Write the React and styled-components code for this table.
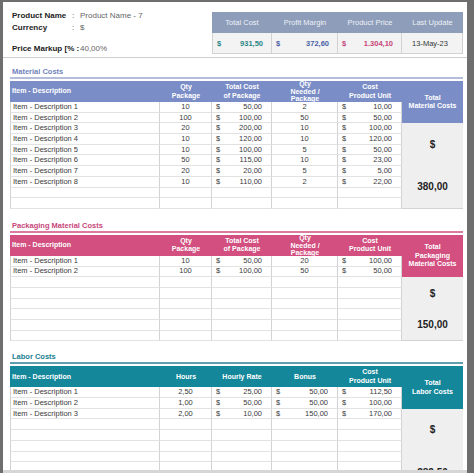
import styled, { createGlobalStyle } from "styled-components";

const GlobalStyle = createGlobalStyle`
  html, body { margin: 0; padding: 0; }
  body {
    background: #6e6e6e;
    font-family: "Liberation Sans", Arial, sans-serif;
    color: #333;
  }
`;

const Sheet = styled.div`
  margin: 2px 0 0 3px;
  width: 464px;
  height: 471px;
  box-sizing: border-box;
  background: #fff;
  overflow: hidden;
  padding: 0 4px 0 7px;
  border-bottom: 3px solid #d6d6d6;
`;

const TopBar = styled.div`
  display: flex;
  justify-content: space-between;
  align-items: flex-start;
  height: 56px;
  box-sizing: border-box;
  margin: 0 -4px 0 -7px;
  padding: 8px 4px 0 9px;
  border-bottom: 1px solid #cfcfcf;
`;

const Info = styled.div`
  display: grid;
  grid-template-columns: 60px 8px auto;
  grid-template-rows: 12px 12px 12px;
  font-size: 8px;
  line-height: 12px;
  white-space: nowrap;
`;

const Label = styled.span`
  font-weight: bold;
  color: #222;
  grid-column: ${(p) => (p.wide ? "1 / span 2" : "auto")};
  margin-top: ${(p) => (p.gap ? "9px" : "0")};
`;

const Colon = styled.span`
  color: #444;
`;

const InfoValue = styled.span`
  color: #666;
  margin-top: ${(p) => (p.gap ? "9px" : "0")};
`;

const Summary = styled.div`
  margin-top: 2px;
  display: grid;
  grid-template-columns: 60px 66px 64px 61px;
  grid-template-rows: 21px 21px;
  font-size: 7.5px;
`;

const SumHead = styled.div`
  background: #8d9dba;
  color: #eef1f7;
  display: flex;
  align-items: center;
  justify-content: center;
`;

const SumValue = styled.div`
  background: #f3f3f3;
  border-right: 1px solid #d2d2d2;
  border-bottom: 1px solid #d2d2d2;
  border-left: ${(p) => (p.first ? "1px solid #d2d2d2" : "none")};
  display: flex;
  align-items: center;
  justify-content: ${(p) => (p.center ? "center" : "space-between")};
  padding: 0 8px 0 4px;
  font-weight: ${(p) => (p.center ? "normal" : "bold")};
  color: ${(p) => p.color};
`;

const SectionTitle = styled.div`
  margin-top: ${(p) => p.top}px;
  padding-left: 2px;
  font-size: 7.5px;
  font-weight: bold;
  line-height: 10px;
  color: ${(p) => p.color};
  border-bottom: 2px solid ${(p) => p.line};
  margin-bottom: 2px;
`;

const Table = styled.div`
  display: grid;
  grid-template-columns: 150px 52px 60px 66px 64px 61px;
  grid-template-rows: 21px repeat(${(p) => p.rows}, 10.7px);
`;

const HeadCell = styled.div`
  background: ${(p) => p.bg};
  color: #fff;
  font-size: 7px;
  font-weight: bold;
  line-height: ${(p) => (p.tight ? "7.5px" : "8.5px")};
  display: flex;
  align-items: center;
  justify-content: ${(p) => (p.left ? "flex-start" : "center")};
  text-align: center;
  padding-left: ${(p) => (p.left ? "2px" : "0")};
  overflow: hidden;
`;

const TotalHead = styled(HeadCell)`
  grid-column: 6;
  grid-row: 1 / span 3;
`;

const Cell = styled.div`
  box-sizing: border-box;
  font-size: 7.5px;
  line-height: 10px;
  color: #3a3a3a;
  border-right: 1px solid #d3d3d3;
  border-bottom: 1px solid #e2e2e2;
  border-left: ${(p) => (p.kind === "text" ? "1px solid #d3d3d3" : "none")};
  display: flex;
  align-items: center;
  justify-content: ${(p) =>
    p.kind === "center" ? "center" : p.kind === "money" ? "space-between" : "flex-start"};
  padding: ${(p) => (p.kind === "money" ? "0 9px 0 4px" : p.kind === "text" ? "0 0 0 2px" : "0")};
  white-space: nowrap;
`;

const TotalBox = styled.div`
  grid-column: 6;
  grid-row: 4 / -1;
  background: #efefef;
  border-bottom: 1px solid #d3d3d3;
  display: grid;
  grid-template-rows: 1fr 1fr;
  place-items: center;
  font-size: 10px;
  font-weight: bold;
  color: #222;
`;

const sections = [
  {
    title: "Material Costs",
    top: 9,
    color: "#7b8dc7",
    titleColor: "#7184bd",
    line: "#b4bedc",
    heads: [["Item - Description"], ["Qty", "Package"], ["Total Cost", "of Package"], ["Qty", "Needed /", "Package"], ["Cost", "Product Unit"]],
    totalHead: ["Total", "Material Costs"],
    kinds: ["text", "center", "money", "center", "money"],
    rows: [
      ["Item - Description 1", "10", "50,00", "2", "10,00"],
      ["Item - Description 2", "100", "100,00", "50", "50,00"],
      ["Item - Description 3", "20", "200,00", "10", "100,00"],
      ["Item - Description 4", "10", "120,00", "10", "120,00"],
      ["Item - Description 5", "10", "100,00", "5", "50,00"],
      ["Item - Description 6", "50", "115,00", "10", "23,00"],
      ["Item - Description 7", "20", "20,00", "5", "5,00"],
      ["Item - Description 8", "10", "110,00", "2", "22,00"],
    ],
    empty: 2,
    total: "380,00",
  },
  {
    title: "Packaging Material Costs",
    top: 12,
    color: "#d24f80",
    titleColor: "#c8477a",
    line: "#dc7a9f",
    heads: [["Item - Description"], ["Qty", "Package"], ["Total Cost", "of Package"], ["Qty", "Needed /", "Package"], ["Cost", "Product Unit"]],
    totalHead: ["Total", "Packaging", "Material Costs"],
    kinds: ["text", "center", "money", "center", "money"],
    rows: [
      ["Item - Description 1", "10", "50,00", "20", "100,00"],
      ["Item - Description 2", "100", "100,00", "50", "50,00"],
    ],
    empty: 6,
    total: "150,00",
  },
  {
    title: "Labor Costs",
    top: 11,
    color: "#14879a",
    titleColor: "#167f90",
    line: "#5e9fab",
    heads: [["Item - Description"], ["Hours"], ["Hourly Rate"], ["Bonus"], ["Cost", "Product Unit"]],
    totalHead: ["Total", "Labor Costs"],
    kinds: ["text", "center", "money", "money", "money"],
    rows: [
      ["Item - Description 1", "2,50", "25,00", "50,00", "112,50"],
      ["Item - Description 2", "1,00", "50,00", "50,00", "100,00"],
      ["Item - Description 3", "2,00", "10,00", "150,00", "170,00"],
    ],
    empty: 7,
    total: "382,50",
  },
];

const Lines = ({ lines }) =>
  lines.map((l, i) => (
    <span key={i}>
      {l}
      {i < lines.length - 1 && <br />}
    </span>
  ));

const CostSection = ({ s }) => {
  const rows = [...s.rows, ...Array(s.empty).fill(["", "", "", "", ""])];
  return (
    <>
      <SectionTitle top={s.top} color={s.titleColor} line={s.line}>
        {s.title}
      </SectionTitle>
      <Table rows={rows.length}>
        {s.heads.map((h, i) => (
          <HeadCell key={i} bg={s.color} left={i === 0} tight={h.length > 2}>
            <div>
              <Lines lines={h} />
            </div>
          </HeadCell>
        ))}
        <TotalHead bg={s.color}>
          <div>
            <Lines lines={s.totalHead} />
          </div>
        </TotalHead>
        {rows.map((r, ri) =>
          r.map((v, ci) => (
            <Cell
              key={`${ri}-${ci}`}
              kind={s.kinds[ci]}
              style={{ gridRow: ri + 2, gridColumn: ci + 1 }}
            >
              {s.kinds[ci] === "money" && v ? (
                <>
                  <span>$</span>
                  <span>{v}</span>
                </>
              ) : (
                v
              )}
            </Cell>
          ))
        )}
        <TotalBox>
          <span>$</span>
          <span>{s.total}</span>
        </TotalBox>
      </Table>
    </>
  );
};

const App = () => (
  <>
    <GlobalStyle />
    <Sheet>
      <TopBar>
        <Info>
          <Label>Product Name</Label>
          <Colon>:</Colon>
          <InfoValue>Product Name - 7</InfoValue>
          <Label>Currency</Label>
          <Colon>:</Colon>
          <InfoValue>$</InfoValue>
          <Label wide gap>
            Price Markup [% :
          </Label>
          <InfoValue gap>40,00%</InfoValue>
        </Info>
        <Summary>
          <SumHead>Total Cost</SumHead>
          <SumHead>Profit Margin</SumHead>
          <SumHead>Product Price</SumHead>
          <SumHead>Last Update</SumHead>
          <SumValue first color="#2a8588">
            <span>$</span>
            <span>931,50</span>
          </SumValue>
          <SumValue color="#4a5ea6">
            <span>$</span>
            <span>372,60</span>
          </SumValue>
          <SumValue color="#c8457a">
            <span>$</span>
            <span>1.304,10</span>
          </SumValue>
          <SumValue center color="#333">
            13-May-23
          </SumValue>
        </Summary>
      </TopBar>
      {sections.map((s) => (
        <CostSection key={s.title} s={s} />
      ))}
    </Sheet>
  </>
);

export default App;
